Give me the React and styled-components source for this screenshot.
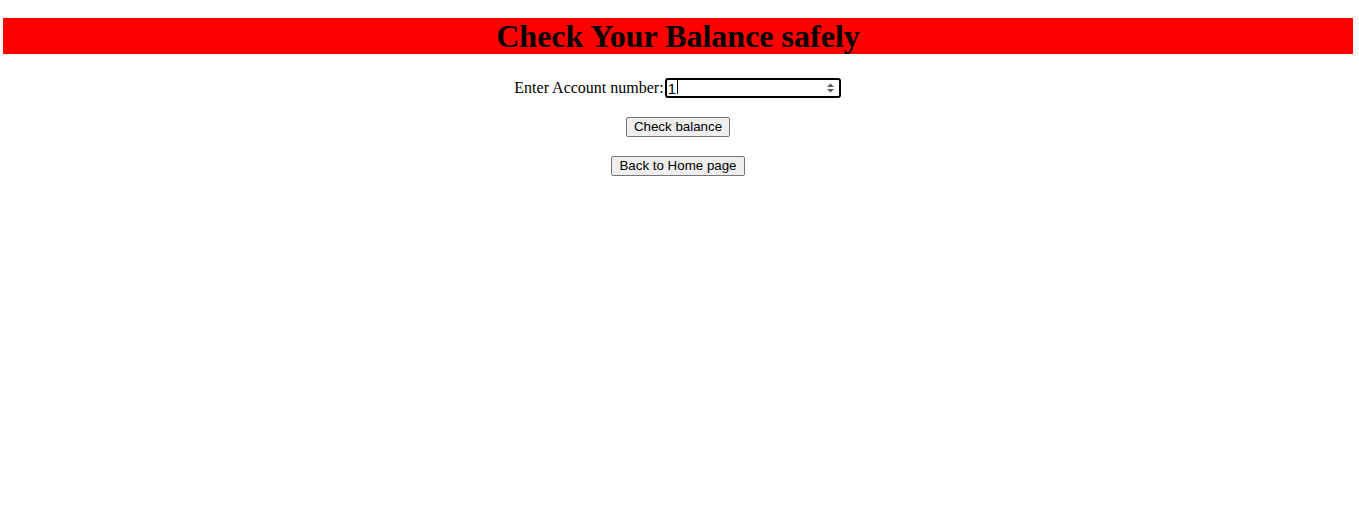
import React from "react";
import styled, { createGlobalStyle } from "styled-components";

const Global = createGlobalStyle`
  html, body { margin: 0; padding: 0; background: #fff; }
  body { font-family: "Liberation Serif", "Times New Roman", serif; color: #000; }
`;

const Page = styled.div`
  padding: 18px 6px 0 3px;
`;

const Banner = styled.h1`
  margin: 0;
  background: #ff0000;
  text-align: center;
  font-family: "Liberation Serif", serif;
  font-weight: bold;
  font-size: 32px;
  line-height: 36px;
  height: 36px;
`;

const Form = styled.div`
  display: flex;
  flex-direction: column;
  align-items: center;
  margin-top: 24px;
  gap: 19px;
`;

const Row = styled.div`
  display: flex;
  align-items: center;
  font-size: 16px;
  height: 20px;
  margin-right: 1px;
`;

const Label = styled.label`
  font-family: "Liberation Serif", serif;
  font-size: 16px;
`;

const Field = styled.div`
  position: relative;
  width: 176px;
  height: 20px;
  box-sizing: border-box;
  border: 2px solid #000;
  border-radius: 3px;
  margin-left: 1px;
`;

const Input = styled.input`
  width: 100%;
  height: 100%;
  border: none;
  outline: none;
  padding: 0 0 0 1px;
  box-sizing: border-box;
  font-family: "Liberation Sans", Arial, sans-serif;
  font-size: 15px;
  background: transparent;
  color: #000;
`;

const Caret = styled.span`
  position: absolute;
  left: 10px;
  top: 0px;
  width: 1px;
  height: 14px;
  background: #000;
`;

const Spin = styled.svg`
  position: absolute;
  right: 4px;
  top: 2px;
`;

const Button = styled.button`
  font-family: "Liberation Sans", Arial, sans-serif;
  font-size: 13.33px;
  height: 20px;
  padding: 1px 7px;
  border: 1px solid #767676;
  border-radius: 2px;
  background: #efefef;
  color: #000;
  line-height: 16px;
`;

export default function App() {
  return (
    <>
      <Global />
      <Page>
        <Banner>Check Your Balance safely</Banner>
        <Form>
          <Row>
            <Label htmlFor="acc">Enter Account number:</Label>
            <Field>
              <Input id="acc" type="text" defaultValue="1" readOnly />
              <Caret />
              <Spin width="9" height="12" viewBox="0 0 9 12">
                <path d="M1 5 L4.5 1.5 L8 5 Z" fill="#555" />
                <path d="M1 7 L4.5 10.5 L8 7 Z" fill="#555" />
              </Spin>
            </Field>
          </Row>
          <Button>Check balance</Button>
          <Button>Back to Home page</Button>
        </Form>
      </Page>
    </>
  );
}
